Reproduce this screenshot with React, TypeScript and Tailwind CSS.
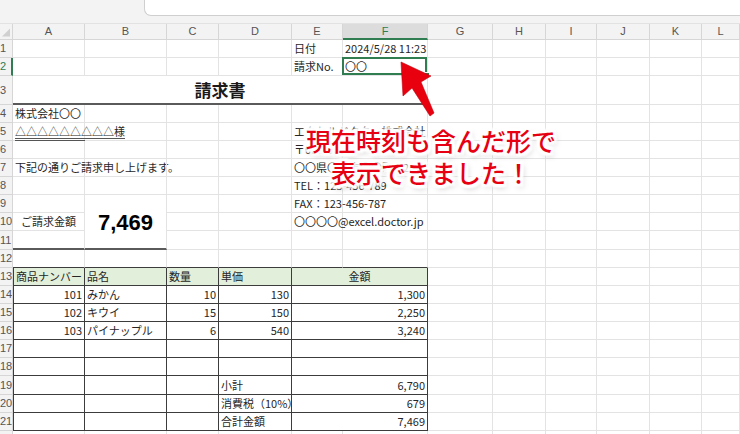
import type { ReactNode } from "react";
import { twMerge } from "tailwind-merge";

const green = "#2f7d50";

const colHeads: [string, string][] = [
  ["A", "w-[72px]"], ["B", "w-[82px]"], ["C", "w-[52px]"], ["D", "w-[73px]"],
  ["E", "w-[51px]"], ["F", "w-[85px]"], ["G", "w-[65px]"], ["H", "w-[53px]"],
  ["I", "w-[51px]"], ["J", "w-[53px]"], ["K", "w-[52px]"], ["L", "flex-1"],
];

function Cell({ w, className, children }: { w: string; className?: string; children?: ReactNode }) {
  return (
    <div
      className={twMerge(
        "shrink-0 h-full flex items-center px-[2px] whitespace-nowrap border-r border-b border-[#e3e3e3] text-[11px] text-[#262626]",
        w,
        className,
      )}
    >
      {children}
    </div>
  );
}

// table cell: dark gridlines
function T({ w, className, children }: { w: string; className?: string; children?: ReactNode }) {
  return <Cell w={w} className={twMerge("border-[#3c3c3c]", className)}>{children}</Cell>;
}

function Row({ n, h = "h-[18px]", active, children }: { n: number; h?: string; active?: boolean; children?: ReactNode }) {
  return (
    <div className={twMerge("flex", h)}>
      <div
        className={twMerge(
          "w-[13px] shrink-0 h-full flex items-center overflow-hidden bg-[#f3f3f3] border-r border-b border-[#d6d6d6] text-[11px] text-[#555] font-['Liberation_Sans',sans-serif]",
          active && "text-[#2f7d50] border-r-2 border-r-[#2f7d50]",
        )}
      >
        {n}
      </div>
      {children ?? <BlankAF />}
      <Cell w="w-[65px]" />
      <Cell w="w-[53px]" />
      <Cell w="w-[51px]" />
      <Cell w="w-[53px]" />
      <Cell w="w-[52px]" />
      <Cell w="flex-1" />
    </div>
  );
}

function BlankAF() {
  return (
    <>
      <Cell w="w-[72px]" />
      <Cell w="w-[82px]" />
      <Cell w="w-[52px]" />
      <Cell w="w-[73px]" />
      <Cell w="w-[51px]" />
      <Cell w="w-[85px]" />
    </>
  );
}

function ItemRow({ n, no, name, qty, price, amount }: { n: number; no?: string; name?: string; qty?: string; price?: string; amount?: string }) {
  return (
    <Row n={n}>
      <T w="w-[72px]" className="border-l justify-end">{no}</T>
      <T w="w-[82px]">{name}</T>
      <T w="w-[52px]" className="justify-end">{qty}</T>
      <T w="w-[73px]" className="justify-end">{price}</T>
      <T w="w-[136px]" className="justify-end">{amount}</T>
    </Row>
  );
}

function TotalRow({ n, h, label, amount }: { n: number; h?: string; label: string; amount: string }) {
  return (
    <Row n={n} h={h}>
      <T w="w-[72px]" className="border-l" />
      <T w="w-[82px]" />
      <T w="w-[52px]" />
      <T w="w-[73px]">{label}</T>
      <T w="w-[136px]" className="justify-end">{amount}</T>
    </Row>
  );
}

export default function App() {
  return (
    <div className="relative w-[740px] h-[434px] overflow-hidden bg-white font-['Noto_Sans_CJK_JP','Noto_Sans',sans-serif]">
      {/* formula bar strip */}
      <div className="h-[23px] flex bg-[#f3f3f3]">
        <div className="w-[144px] shrink-0" />
        <div className="flex-1 h-[16px] bg-white border-l border-b border-[#cfcfcf] rounded-bl-[7px]" />
      </div>

      {/* column headers */}
      <div className="flex h-[17px] bg-[#f3f3f3] border-t border-[#e2e2e2] font-['Liberation_Sans',sans-serif]">
        <div className="w-[13px] shrink-0 h-full flex items-end justify-end p-[2px] border-r border-b border-[#d6d6d6]">
          <svg width="9" height="9" viewBox="0 0 9 9">
            <polygon points="9,0 9,9 0,9" fill="#d0d0d0" />
          </svg>
        </div>
        {colHeads.map(([c, w]) => (
          <div
            key={c}
            className={twMerge(
              "shrink-0 h-full flex items-center justify-center border-r border-b border-[#d6d6d6] text-[11px] text-[#555]",
              w,
              c === "F" && "bg-[#dcdcdc] text-[#2f7d50] border-b-2 border-b-[#2f7d50]",
            )}
          >
            {c}
          </div>
        ))}
      </div>

      <Row n={1}>
        <Cell w="w-[72px]" />
        <Cell w="w-[82px]" />
        <Cell w="w-[52px]" />
        <Cell w="w-[73px]" />
        <Cell w="w-[51px]">日付</Cell>
        <Cell w="w-[85px]">2024/5/28 11:23</Cell>
      </Row>
      <Row n={2} active>
        <Cell w="w-[72px]" />
        <Cell w="w-[82px]" />
        <Cell w="w-[52px]" />
        <Cell w="w-[73px]" />
        <Cell w="w-[51px]">請求No.</Cell>
        <Cell w="w-[85px]" className="relative">
          〇〇
          <div className="absolute -left-[1px] -top-[1px] right-0 bottom-0 border-2" style={{ borderColor: green }} />
          <div className="absolute -right-[3px] -bottom-[3px] w-[6px] h-[6px] bg-[#2f7d50] border border-white" />
        </Cell>
      </Row>
      <Row n={3} h="h-[29px]">
        <Cell w="w-[415px]" className="justify-center text-[17px] font-bold text-[#1a1a1a] border-b-2 border-b-[#5a5a5a]">
          請求書
        </Cell>
      </Row>
      <Row n={4}>
        <Cell w="w-[72px]">株式会社〇〇</Cell>
        <Cell w="w-[82px]" />
        <Cell w="w-[52px]" />
        <Cell w="w-[73px]" />
        <Cell w="w-[51px]" />
        <Cell w="w-[85px]" />
      </Row>
      <Row n={5}>
        <Cell w="w-[72px]"><span className="underline decoration-double decoration-[#555] underline-offset-2">△△△△△△△△△様</span></Cell>
        <Cell w="w-[82px]" />
        <Cell w="w-[52px]" />
        <Cell w="w-[73px]" />
        <Cell w="w-[51px]">エクセルドクター株式会社</Cell>
        <Cell w="w-[85px]" />
      </Row>
      <Row n={6}>
        <Cell w="w-[72px]" />
        <Cell w="w-[82px]" />
        <Cell w="w-[52px]" />
        <Cell w="w-[73px]" />
        <Cell w="w-[51px]">〒000-0000</Cell>
        <Cell w="w-[85px]" />
      </Row>
      <Row n={7}>
        <Cell w="w-[72px]">下記の通りご請求申し上げます。</Cell>
        <Cell w="w-[82px]" />
        <Cell w="w-[52px]" />
        <Cell w="w-[73px]" />
        <Cell w="w-[51px]">〇〇県〇〇市〇〇町1-2-3</Cell>
        <Cell w="w-[85px]" />
      </Row>
      <Row n={8}>
        <Cell w="w-[72px]" />
        <Cell w="w-[82px]" />
        <Cell w="w-[52px]" />
        <Cell w="w-[73px]" />
        <Cell w="w-[51px]">TEL：123-456-789</Cell>
        <Cell w="w-[85px]" />
      </Row>
      <Row n={9}>
        <Cell w="w-[72px]" />
        <Cell w="w-[82px]" className="border-b-0" />
        <Cell w="w-[52px]" />
        <Cell w="w-[73px]" />
        <Cell w="w-[51px]">FAX：123-456-787</Cell>
        <Cell w="w-[85px]" />
      </Row>
      <Row n={10}>
        <Cell w="w-[72px]" className="justify-center">ご請求金額</Cell>
        <Cell w="w-[82px]" className="justify-center border-b-0 text-[22px] font-bold text-black font-['Liberation_Sans',sans-serif]">7,469</Cell>
        <Cell w="w-[52px]" />
        <Cell w="w-[73px]" />
        <Cell w="w-[51px]">〇〇〇〇@excel.doctor.jp</Cell>
        <Cell w="w-[85px]" />
      </Row>
      <Row n={11} h="h-[19px]">
        <Cell w="w-[72px]" className="border-b-2 border-b-[#5a5a5a]" />
        <Cell w="w-[82px]" className="border-b-2 border-b-[#5a5a5a]" />
        <Cell w="w-[52px]" />
        <Cell w="w-[73px]" />
        <Cell w="w-[51px]" />
        <Cell w="w-[85px]" />
      </Row>
      <Row n={12}>
        <Cell w="w-[72px]" className="border-b-[#3c3c3c]" />
        <Cell w="w-[82px]" className="border-b-[#3c3c3c]" />
        <Cell w="w-[52px]" className="border-b-[#3c3c3c]" />
        <Cell w="w-[73px]" className="border-b-[#3c3c3c]" />
        <Cell w="w-[51px]" className="border-b-[#3c3c3c]" />
        <Cell w="w-[85px]" className="border-b-[#3c3c3c]" />
      </Row>
      <Row n={13}>
        <T w="w-[72px]" className="border-l bg-[#e2efda]">商品ナンバー</T>
        <T w="w-[82px]" className="bg-[#e2efda]">品名</T>
        <T w="w-[52px]" className="bg-[#e2efda]">数量</T>
        <T w="w-[73px]" className="bg-[#e2efda]">単価</T>
        <T w="w-[136px]" className="justify-center bg-[#e2efda]">金額</T>
      </Row>
      <ItemRow n={14} no="101" name="みかん" qty="10" price="130" amount="1,300" />
      <ItemRow n={15} no="102" name="キウイ" qty="15" price="150" amount="2,250" />
      <ItemRow n={16} no="103" name="パイナップル" qty="6" price="540" amount="3,240" />
      <ItemRow n={17} />
      <ItemRow n={18} />
      <TotalRow n={19} h="h-[19px]" label="小計" amount="6,790" />
      <TotalRow n={20} label="消費税（10%）" amount="679" />
      <TotalRow n={21} label="合計金額" amount="7,469" />
      <Row n={22} />

      {/* red arrow pointing at F2 */}
      <svg className="absolute left-0 top-0 pointer-events-none" width="740" height="434" viewBox="0 0 740 434">
        <polygon
          points="401,62 431,76 421,82 434,113 430,116 412,88 403,96"
          fill="#e8000f"
          stroke="#c4000c"
          strokeWidth="0.6"
          strokeLinejoin="round"
        />
      </svg>

      {/* callout */}
      <div className="absolute left-[297px] top-[124px] w-[268px] text-center text-[25px] leading-[32px] font-medium text-[#e60012] [text-shadow:3px_0_2px_#fff,-3px_0_2px_#fff,0_3px_2px_#fff,0_-3px_2px_#fff,3px_3px_2px_#fff,-3px_-3px_2px_#fff,3px_-3px_2px_#fff,-3px_3px_2px_#fff,0_0_6px_#fff,0_0_6px_#fff,2px_3px_6px_rgba(0,0,0,0.35)]">
        現在時刻も含んだ形で
        <br />
        表示できました！
      </div>
    </div>
  );
}
